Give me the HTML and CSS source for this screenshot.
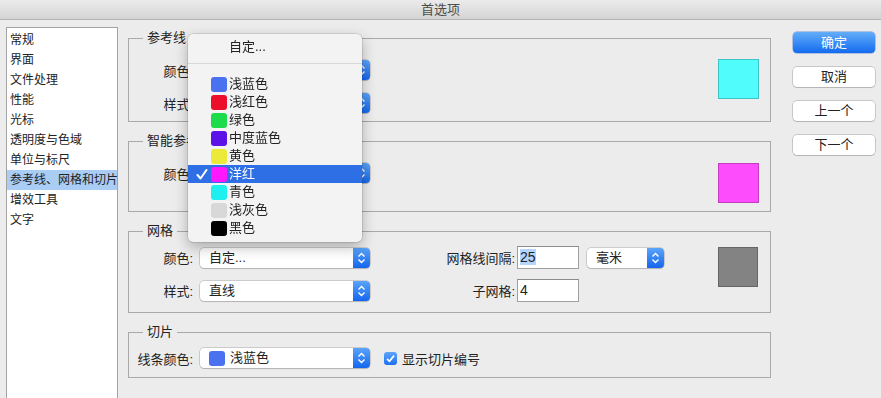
FILE: index.html
```html
<!DOCTYPE html>
<html lang="zh-CN">
<head>
  <meta charset="UTF-8">
  <title>首选项</title>
  <link rel="stylesheet" href="styles.css">
</head>
<body>

  <div class="titlebar">首选项</div>

  <div class="window">
    <ul class="sidebar">
      <li>常规</li>
      <li>界面</li>
      <li>文件处理</li>
      <li>性能</li>
      <li>光标</li>
      <li>透明度与色域</li>
      <li>单位与标尺</li>
      <li class="active">参考线、网格和切片</li>
      <li>增效工具</li>
      <li>文字</li>
    </ul>

    <div class="panels">
      <fieldset class="group group-guides">
        <legend>参考线</legend>
        <div class="group-body">
          <div class="fields">
            <div class="row">
              <label class="label">颜色:</label>
              <div class="select"><span class="stepper"></span></div>
            </div>
            <div class="row">
              <label class="label">样式:</label>
              <div class="select"><span class="stepper"></span></div>
            </div>
          </div>
          <span class="swatch swatch-cyan"></span>
        </div>
      </fieldset>

      <fieldset class="group group-smart">
        <legend>智能参考线</legend>
        <div class="group-body">
          <div class="fields">
            <div class="row">
              <label class="label">颜色:</label>
              <div class="select"><span class="stepper"></span></div>
            </div>
          </div>
          <span class="swatch swatch-magenta"></span>
        </div>
      </fieldset>

      <fieldset class="group group-grid">
        <legend>网格</legend>
        <div class="grid-body">
          <label class="label">颜色:</label>
          <div class="select"><span class="select-value">自定...</span><span class="stepper"></span></div>
          <label class="label label-wide">网格线间隔:</label>
          <div class="textfield"><span class="selected-text">25</span></div>
          <div class="select select-small"><span class="select-value">毫米</span><span class="stepper"></span></div>
          <span class="swatch swatch-gray"></span>

          <label class="label">样式:</label>
          <div class="select"><span class="select-value">直线</span><span class="stepper"></span></div>
          <label class="label label-wide">子网格:</label>
          <div class="textfield">4</div>
        </div>
      </fieldset>

      <fieldset class="group group-slices">
        <legend>切片</legend>
        <div class="row">
          <label class="label">线条颜色:</label>
          <div class="select"><span class="chip chip-blue"></span><span class="select-value">浅蓝色</span><span class="stepper"></span></div>
          <span class="checkbox"></span>
          <span class="check-label">显示切片编号</span>
        </div>
      </fieldset>
    </div>

    <div class="actions">
      <button class="btn btn-primary">确定</button>
      <button class="btn">取消</button>
      <button class="btn">上一个</button>
      <button class="btn">下一个</button>
    </div>
  </div>

  <!-- open colour popup of the 参考线 select -->
  <div class="menu">
    <div class="menu-item menu-custom">自定...</div>
    <div class="menu-sep"></div>
    <div class="menu-item"><span class="chip chip-blue"></span>浅蓝色</div>
    <div class="menu-item"><span class="chip chip-red"></span>浅红色</div>
    <div class="menu-item"><span class="chip chip-green"></span>绿色</div>
    <div class="menu-item"><span class="chip chip-violet"></span>中度蓝色</div>
    <div class="menu-item"><span class="chip chip-yellow"></span>黄色</div>
    <div class="menu-item selected">
      <svg class="tick" width="12" height="11" viewBox="0 0 12 11"><path d="M1.5 6 L4.5 9.5 L10.5 1" fill="none" stroke="#fff" stroke-width="2" stroke-linecap="round" stroke-linejoin="round"/></svg>
      <span class="chip chip-magenta"></span>洋红
    </div>
    <div class="menu-item"><span class="chip chip-cyan"></span>青色</div>
    <div class="menu-item"><span class="chip chip-lightgray"></span>浅灰色</div>
    <div class="menu-item"><span class="chip chip-black"></span>黑色</div>
  </div>

</body>
</html>
```

FILE: styles.css
```css
:root {
  --bg-window: #ececec;
  --border-group: #a9a9a9;
  --text-primary: #222222;
  --accent: #2f6fe6;
  --select-border: rgba(0, 0, 0, 0.28);
}

* {
  box-sizing: border-box;
  margin: 0;
  padding: 0;
}

body {
  font-family: 'Liberation Sans', 'Noto Sans CJK SC', sans-serif;
  font-size: 13px;
  color: var(--text-primary);
  background: var(--bg-window);
  height: 100vh;
  overflow: hidden;
}

.titlebar {
  height: 20px;
  line-height: 19px;
  text-align: center;
  color: #4d4d4d;
  background: linear-gradient(#ebebeb, #d4d4d4);
  border-bottom: 1px solid #b4b4b4;
}

.window {
  display: flex;
  align-items: flex-start;
  padding: 7px 0 0 6px;
}

/* left category list */
.sidebar {
  list-style: none;
  width: 112px;
  height: 371px;
  background: #ffffff;
  border: 1px solid #a3a3a3;
  border-bottom: none;
  padding-top: 2px;
  font-size: 12px;
}

.sidebar li {
  height: 20px;
  line-height: 20px;
  padding-left: 3px;
  white-space: nowrap;
}

.sidebar li.active {
  background: #a9cdf5;
}

/* group boxes */
.panels {
  width: 643px;
  margin: 2px 0 0 10px;
  display: flex;
  flex-direction: column;
  gap: 10px;
}

.group {
  border: 1px solid var(--border-group);
  padding: 0 11px 8px 8px;
  min-width: 0;
}

.group legend {
  line-height: 18px;
  padding: 0 4px;
  margin-left: 6px;
}

.group-body {
  display: flex;
  align-items: flex-start;
}

.fields {
  flex: 1;
  display: flex;
  flex-direction: column;
  gap: 13px;
}

.group-guides .group-body {
  padding-top: 13px;
}

.group-guides .swatch {
  margin-top: -1px;
}

.group-smart .group-body {
  padding-top: 13px;
}

.group-grid {
  padding: 6px 12px 10px 8px;
}

.group-slices {
  padding: 7px 11px 9px 8px;
}

.row {
  display: flex;
  align-items: center;
}

.label {
  width: 63px;
  padding-right: 7px;
  text-align: right;
  white-space: nowrap;
}

.grid-body {
  display: grid;
  grid-template-columns: 63px 170px 1fr 70px 131px 40px;
  grid-template-rows: 23px 23px;
  row-gap: 10px;
  align-items: center;
}

.label-wide {
  width: auto;
  padding-right: 2px;
}

.grid-body .swatch {
  grid-row: span 2;
  align-self: start;
  margin-top: 1px;
}

/* popup buttons */
.select {
  width: 170px;
  height: 20px;
  display: flex;
  align-items: center;
  padding-left: 9px;
  background: #ffffff;
  border-radius: 4px;
  box-shadow: 0 0 0 0.5px var(--select-border), 0 1px 1px rgba(0, 0, 0, 0.12);
  line-height: 20px;
  white-space: nowrap;
}

.select-small {
  width: 77px;
}

.select .chip {
  margin-right: 5px;
}

.stepper {
  margin-left: auto;
  width: 17px;
  height: 20px;
  border-radius: 0 4px 4px 0;
  background:
    url("data:image/svg+xml,%3Csvg xmlns='http://www.w3.org/2000/svg' width='17' height='20'%3E%3Cpath d='M5.5 8.5 L8.5 5.5 L11.5 8.5 M5.5 11.5 L8.5 14.5 L11.5 11.5' fill='none' stroke='white' stroke-width='1.4'/%3E%3C/svg%3E") center / 17px 20px no-repeat,
    linear-gradient(#5aa4f9, #1566ee);
}

.textfield {
  width: 62px;
  height: 23px;
  border: 1px solid #a0a0a0;
  border-top-color: #8c8c8c;
  background: #ffffff;
  padding-left: 2px;
  line-height: 21px;
  font-size: 14px;
}

.selected-text {
  background: #b4d5fe;
}

/* colour chips and swatches */
.chip {
  display: inline-block;
  width: 16px;
  height: 15px;
  border-radius: 3px;
  flex-shrink: 0;
}

.chip-blue { background: #4a72f0; }
.chip-red { background: #ec0f2c; }
.chip-green { background: #1cdc4c; }
.chip-violet { background: #5c12e6; }
.chip-yellow { background: #ecea38; }
.chip-magenta { background: #ff18ff; }
.chip-cyan { background: #1ef0f0; }
.chip-lightgray { background: #d8d8d8; }
.chip-black { background: #000000; }

.swatch {
  width: 41px;
  height: 40px;
  border: 1px solid rgba(0, 0, 0, 0.22);
  flex-shrink: 0;
}

.swatch-cyan { background: #50fcfc; }
.swatch-magenta { background: #fc4cfc; }
.swatch-gray { background: #838383; width: 40px; }

.checkbox {
  width: 13px;
  height: 13px;
  margin-left: 14px;
  border-radius: 3px;
  background:
    url("data:image/svg+xml,%3Csvg xmlns='http://www.w3.org/2000/svg' width='13' height='13'%3E%3Cpath d='M3 6.8 L5.5 9.3 L10 3.6' fill='none' stroke='white' stroke-width='1.7'/%3E%3C/svg%3E") center / 13px 13px no-repeat,
    linear-gradient(#5ea6f9, #1f6ff0);
}

.check-label {
  margin-left: 5px;
}

/* right buttons */
.actions {
  width: 82px;
  margin: 5px 0 0 22px;
  display: flex;
  flex-direction: column;
  gap: 14px;
}

.btn {
  height: 20px;
  border: none;
  border-radius: 4px;
  background: #ffffff;
  box-shadow: 0 0 0 0.5px rgba(0, 0, 0, 0.3), 0 1px 1px rgba(0, 0, 0, 0.1);
  font-family: inherit;
  font-size: 13px;
  color: var(--text-primary);
  line-height: 20px;
}

.btn-primary {
  height: 21px;
  color: #ffffff;
  background: linear-gradient(#63adfa, #136bef);
  box-shadow: 0 0 0 0.5px rgba(0, 60, 180, 0.5);
}

/* popup menu over the first colour select */
.menu {
  position: fixed;
  left: 188px;
  top: 34px;
  width: 174px;
  padding: 4px 0 5px;
  background: #f3f3f3;
  border-radius: 5px;
  box-shadow: 0 0 0 0.5px rgba(0, 0, 0, 0.2), 0 5px 14px rgba(0, 0, 0, 0.28);
}

.menu-item {
  position: relative;
  height: 18px;
  display: flex;
  align-items: center;
  gap: 2px;
  padding-left: 23px;
  line-height: 18px;
}

.menu-custom {
  padding-left: 41px;
}

.menu-sep {
  height: 1px;
  background: #d8d8d8;
  margin: 7px 0 11px;
}

.menu-item.selected {
  background: var(--accent);
  color: #ffffff;
}

.tick {
  position: absolute;
  left: 8px;
  top: 4px;
}
```
